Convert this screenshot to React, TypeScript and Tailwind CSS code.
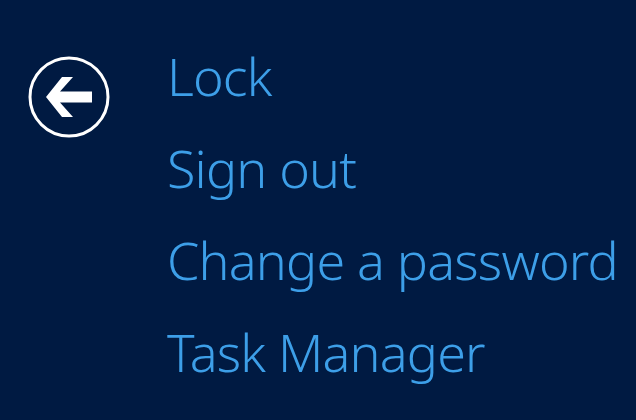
export default function App() {
  const items = ['Lock', 'Sign out', 'Change a password', 'Task Manager']
  return (
    <div className="flex h-[420px] w-[636px] overflow-hidden bg-[#001a42] font-['Noto_Sans',sans-serif]">
      <div className="w-[167px] shrink-0 pl-[28px] pt-[56px]">
        <svg width="82" height="82" viewBox="0 0 82 82" fill="none">
          <circle cx="41" cy="41" r="39" stroke="white" strokeWidth="3" />
          <path d="M34 21 L18 41 L34 61 L45 61 L32 46.5 L64 46.5 L64 35.5 L32 35.5 L45 21 Z" fill="white" />
        </svg>
      </div>
      <ul className="pt-[30px] text-[52px] font-light leading-[92px] text-[#3d9fe8]">
        {items.map((t) => (
          <li key={t} className="tracking-[-0.8px]">{t}</li>
        ))}
      </ul>
    </div>
  )
}
